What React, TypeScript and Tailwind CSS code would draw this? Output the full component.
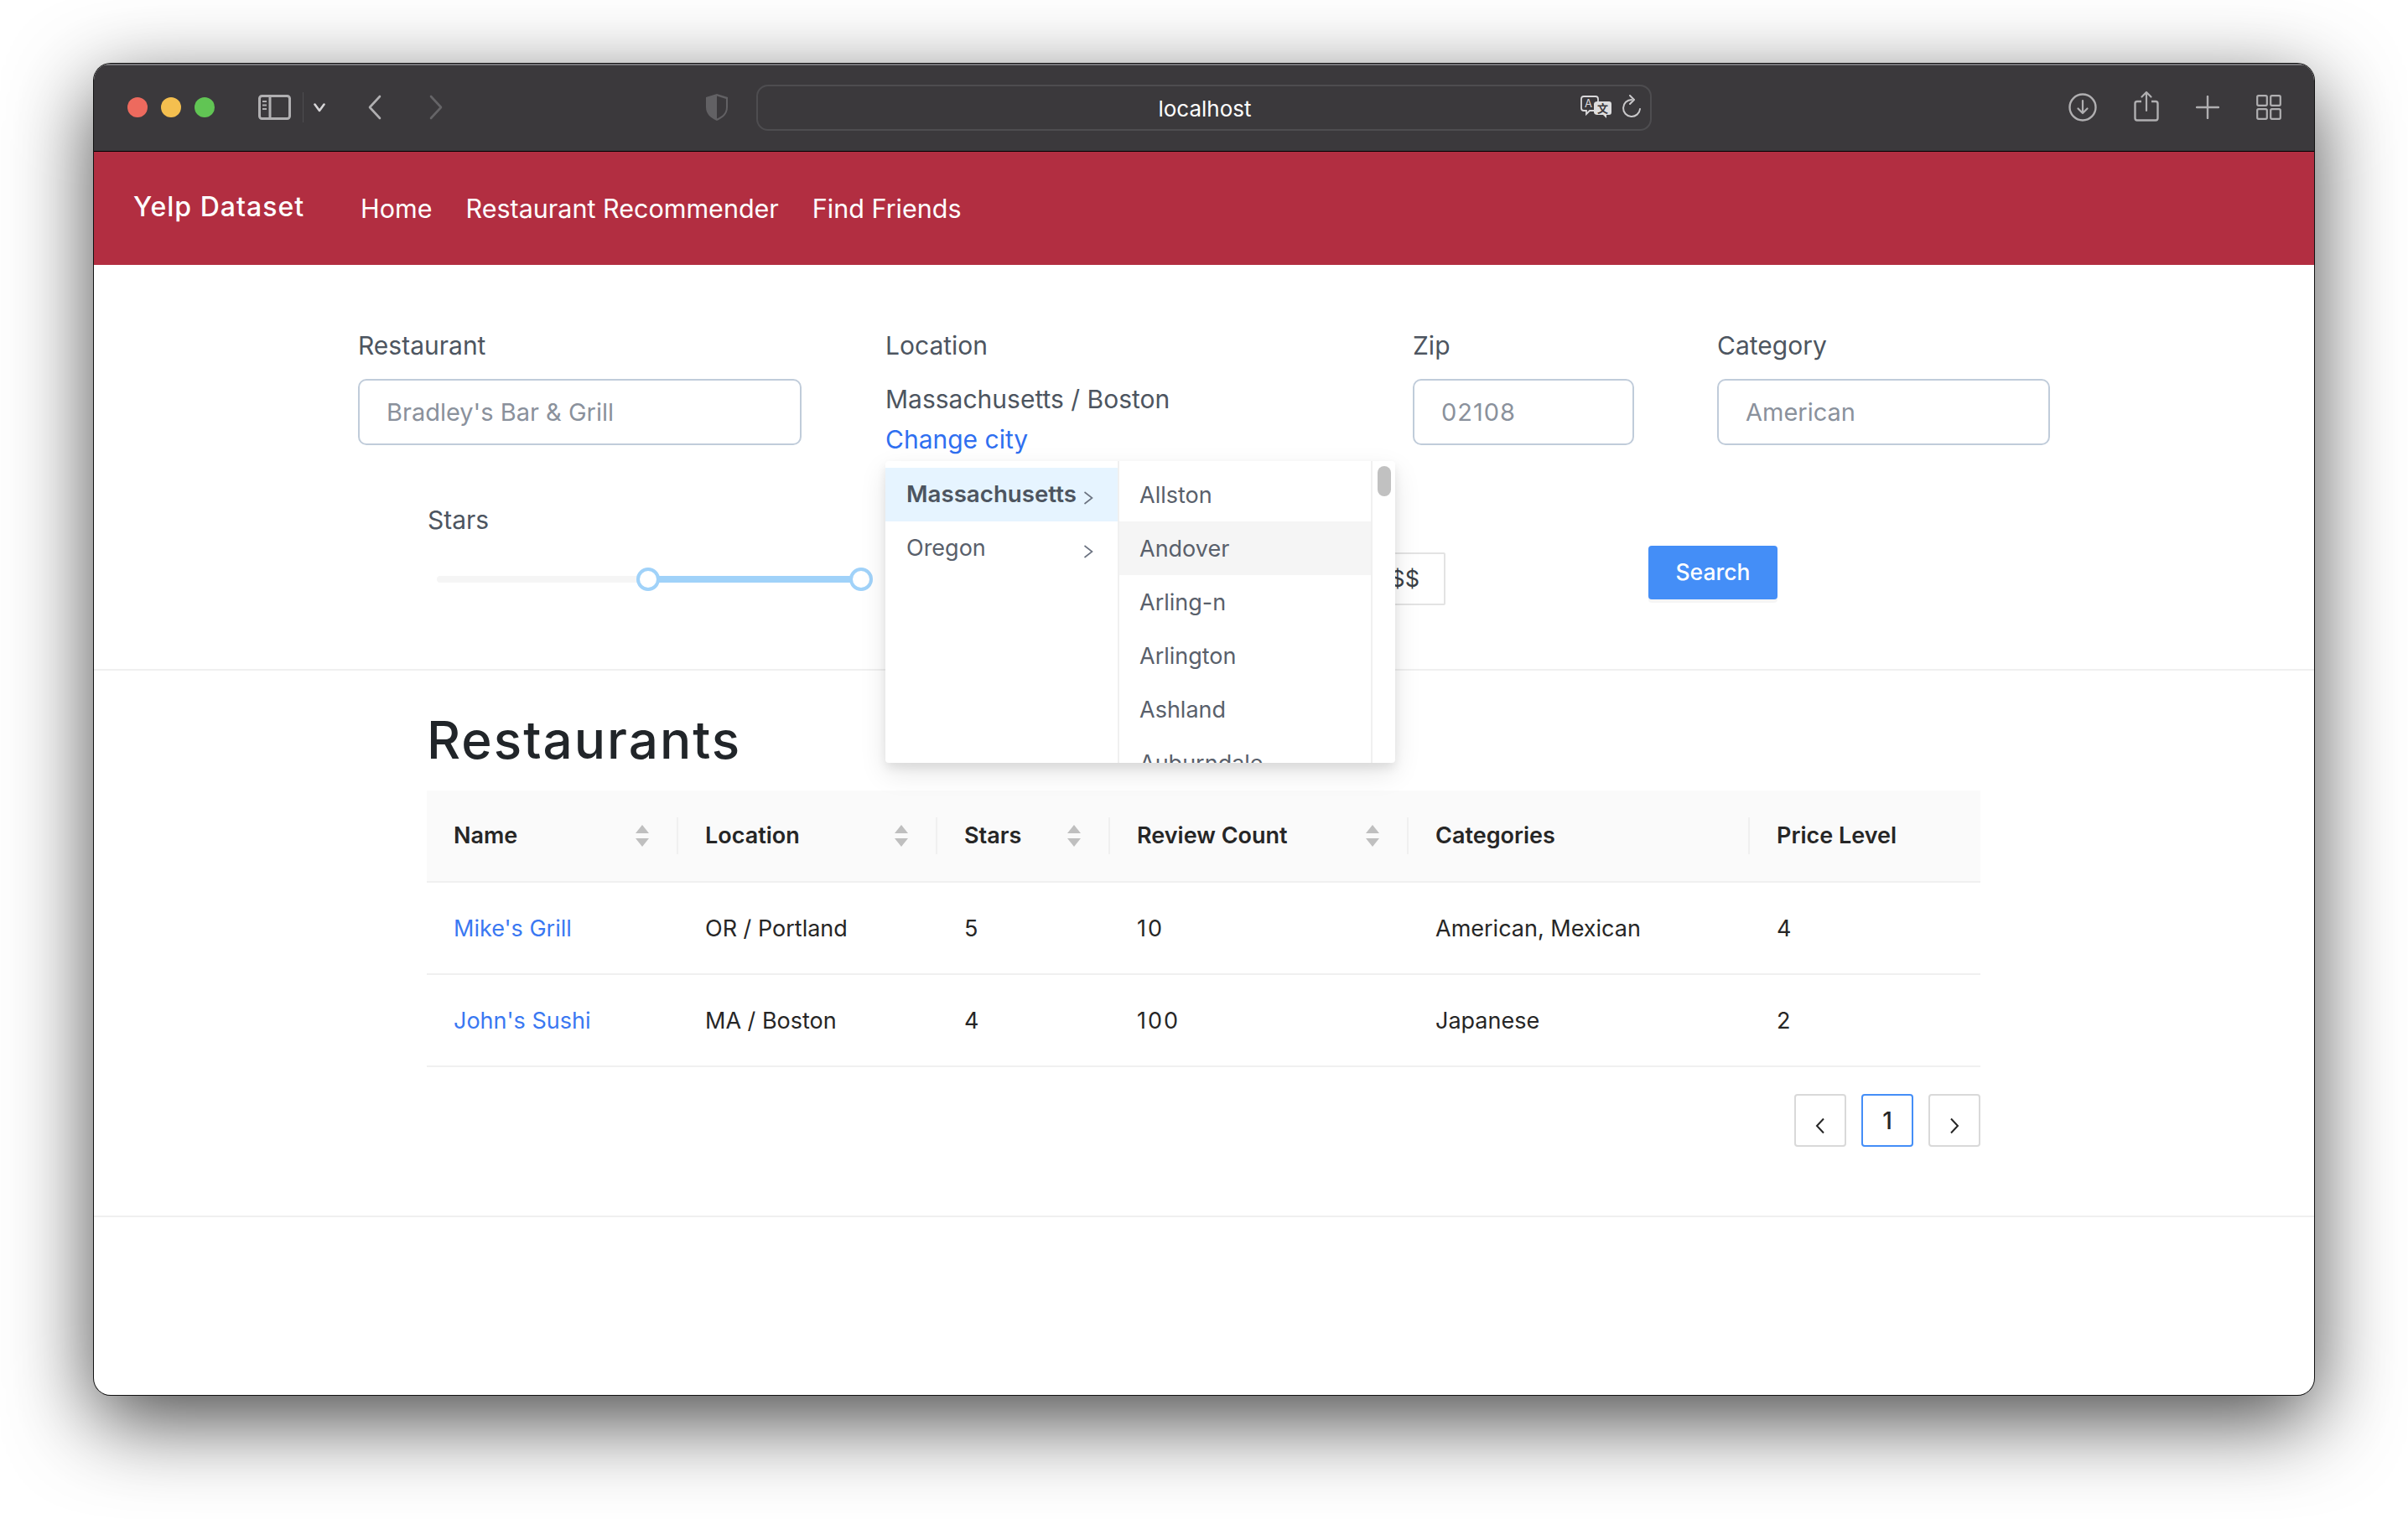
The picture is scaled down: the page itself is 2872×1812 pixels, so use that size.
const columns = [
  { title: 'Name', width: 'w-[300px]', sort: true },
  { title: 'Location', width: 'w-[309px]', sort: true },
  { title: 'Stars', width: 'w-[206px]', sort: true },
  { title: 'Review Count', width: 'w-[356px]', sort: true },
  { title: 'Categories', width: 'w-[407px]', sort: false },
  { title: 'Price Level', width: 'w-[275px]', sort: false },
]

const rows = [
  { name: "Mike's Grill", location: 'OR / Portland', stars: '5', reviews: '10', categories: 'American, Mexican', price: '4' },
  { name: "John's Sushi", location: 'MA / Boston', stars: '4', reviews: '100', categories: 'Japanese', price: '2' },
]

const cities = ['Allston', 'Andover', 'Arling-n', 'Arlington', 'Ashland', 'Auburndale']

function SortIcon() {
  return (
    <svg width="16" height="26" viewBox="0 0 16 26" className="fill-[#bfbfbf] shrink-0">
      <path d="M8 0 L16 10 H0 Z" />
      <path d="M0 16 H16 L8 26 Z" />
    </svg>
  )
}

function MenuChevron() {
  return (
    <svg width="12" height="16" viewBox="0 0 12 16" fill="none" className="stroke-[#6b7280] mt-2 shrink-0">
      <path d="M1.5 1 L10.5 8 L1.5 15" strokeWidth="1.6" />
    </svg>
  )
}

function Toolbar() {
  return (
    <div className="h-[105px] shrink-0 bg-[#3b393c] border-b border-black flex items-center pl-[40px] pr-[39px] shadow-[inset_0_2px_0_#77767a]">
      <div className="flex gap-4">
        <span className="w-6 h-6 rounded-full bg-[#ed6a5e]" />
        <span className="w-6 h-6 rounded-full bg-[#f4bf4f]" />
        <span className="w-6 h-6 rounded-full bg-[#61c554]" />
      </div>
      <svg width="39" height="30" viewBox="0 0 39 30" fill="none" className="ml-[52px] stroke-[#b0afb1]">
        <rect x="1.5" y="1.5" width="36" height="27" rx="3" strokeWidth="3" />
        <path d="M14 2 V28" strokeWidth="3" />
        <path d="M5 8 H10 M5 12.5 H10 M5 17 H10" strokeWidth="2" />
      </svg>
      <span className="ml-[14px] w-px h-[36px] bg-[#4e4d50]" />
      <svg width="14" height="11" viewBox="0 0 14 11" fill="none" className="ml-[12px] stroke-[#d6d5d7]">
        <path d="M1.5 1.5 L7 9 L12.5 1.5" strokeWidth="2.6" strokeLinecap="round" strokeLinejoin="round" />
      </svg>
      <svg width="16" height="30" viewBox="0 0 16 30" fill="none" className="ml-[51px] stroke-[#b0afb1]">
        <path d="M14 2 L2 15 L14 28" strokeWidth="2.6" strokeLinecap="round" strokeLinejoin="round" />
      </svg>
      <svg width="16" height="30" viewBox="0 0 16 30" fill="none" className="ml-[57px] stroke-[#656467]">
        <path d="M2 2 L14 15 L2 28" strokeWidth="2.6" strokeLinecap="round" strokeLinejoin="round" />
      </svg>
      <svg width="28" height="34" viewBox="0 0 28 34" className="ml-[313px]">
        <path d="M14 1 L27 5 V17 C27 25 21 30 14 33 C7 30 1 25 1 17 V5 Z" fill="#626164" />
        <path d="M14 3.5 L25 7 V17 C25 24 20 28 14 30.5 Z" fill="#3b393c" />
      </svg>
      <div className="ml-[33px] w-[1068px] h-[55px] rounded-[14px] border-2 border-[#4e4d50] grid grid-cols-[1fr_auto_1fr] items-center">
        <span />
        <span className="text-[26px] leading-none text-white mt-[4px] ml-[2px]">localhost</span>
        <div className="flex justify-end items-center pr-[10px]">
          <svg width="38" height="28" viewBox="0 0 38 28" className="mr-[11px]">
            <path d="M4 1 H18 C20 1 21 2 21 4 V15 C21 17 20 18 18 18 H11 L7 22 V18 H4 C2 18 1 17 1 15 V4 C1 2 2 1 4 1 Z" fill="none" stroke="#d9d8da" strokeWidth="1.8" />
            <text x="5" y="14" fontSize="13" fill="#d9d8da" fontFamily="Inter, sans-serif">A</text>
            <path d="M20 7 H34 C36 7 37 8 37 10 V20 C37 22 36 23 34 23 H31 V27 L27 23 H20 C18 23 16 22 16 20 V10 C16 8 18 7 20 7 Z" fill="#dededf" />
            <text x="20" y="20" fontSize="13" fontWeight="700" fill="#3b393c" fontFamily="'Noto Sans CJK SC', sans-serif">文</text>
          </svg>
          <svg width="24" height="30" viewBox="0 0 24 30" fill="none" className="stroke-[#c9c8ca]">
            <path d="M12 6 A10 10 0 1 0 22 17" strokeWidth="2" strokeLinecap="round" />
            <path d="M10 1 L15 6 L10 11" strokeWidth="2" strokeLinecap="round" strokeLinejoin="round" />
          </svg>
        </div>
      </div>
      <div className="ml-auto flex items-center gap-[44px]">
        <svg width="34" height="34" viewBox="0 0 34 34" fill="none" className="stroke-[#b0afb1]">
          <circle cx="17" cy="17" r="15.5" strokeWidth="2.4" />
          <path d="M17 9 V24 M11.5 18.5 L17 24 L22.5 18.5" strokeWidth="2.2" strokeLinecap="round" strokeLinejoin="round" />
        </svg>
        <svg width="30" height="37" viewBox="0 0 30 37" fill="none" className="stroke-[#b0afb1] -mt-[3px]">
          <path d="M9 13 H4 C2.5 13 1.5 14 1.5 15.5 V33 C1.5 34.5 2.5 35.5 4 35.5 H26 C27.5 35.5 28.5 34.5 28.5 33 V15.5 C28.5 14 27.5 13 26 13 H21" strokeWidth="2.4" />
          <path d="M15 24 V2 M9.5 7.5 L15 2 L20.5 7.5" strokeWidth="2.2" strokeLinecap="round" strokeLinejoin="round" />
        </svg>
        <svg width="28" height="28" viewBox="0 0 28 28" fill="none" className="stroke-[#b0afb1]">
          <path d="M14 1 V27 M1 14 H27" strokeWidth="2.4" strokeLinecap="round" />
        </svg>
        <svg width="30" height="30" viewBox="0 0 30 30" fill="none" className="stroke-[#b0afb1]">
          <rect x="1.2" y="1.2" width="11.6" height="11.6" rx="1.5" strokeWidth="2.2" />
          <rect x="17.2" y="1.2" width="11.6" height="11.6" rx="1.5" strokeWidth="2.2" />
          <rect x="1.2" y="17.2" width="11.6" height="11.6" rx="1.5" strokeWidth="2.2" />
          <rect x="17.2" y="17.2" width="11.6" height="11.6" rx="1.5" strokeWidth="2.2" />
        </svg>
      </div>
    </div>
  )
}

function NavBar() {
  return (
    <nav className="h-[135px] shrink-0 bg-[#b22e41] text-white flex items-center pl-[47px]">
      <a className="text-[32px] font-medium tracking-[1px] w-[271px] -mt-[3px]">Yelp Dataset</a>
      <div className="flex gap-[40px] text-[30.5px] pt-[1px]">
        <a>Home</a>
        <a>Restaurant Recommender</a>
        <a>Find Friends</a>
      </div>
    </nav>
  )
}

function CityPopup() {
  return (
    <div className="absolute left-0 top-[162px] z-10 w-[608px] h-[360px] bg-white flex overflow-hidden rounded-[4px] shadow-[0_12px_32px_rgba(0,0,0,0.1),0_6px_12px_rgba(0,0,0,0.08)]">
      <div className="w-[279px] border-r-2 border-[#f0f0f0] pt-2">
        <div className="h-16 bg-[#e6f4ff] flex items-center justify-between pl-[25px] pr-[29px] text-[27.7px] font-semibold text-[#4d5560]">
          <span>Massachusetts</span>
          <MenuChevron />
        </div>
        <div className="h-16 flex items-center justify-between pl-[25px] pr-[29px] text-[27px] text-[#59606b]">
          <span>Oregon</span>
          <MenuChevron />
        </div>
      </div>
      <div className="w-[302px] border-r-2 border-[#f0f0f0] pt-2 text-[27px] text-[#59606b]">
        {cities.map((city) => (
          <div key={city} className={`h-16 flex items-center pl-[24px] pt-[2px] ${city === 'Andover' ? 'bg-[#f5f5f5]' : ''}`}>
            {city}
          </div>
        ))}
      </div>
      <div className="flex-1 pt-[6px] flex justify-center">
        <div className="w-4 h-9 rounded-full bg-[#c1c1c1]" />
      </div>
    </div>
  )
}

function Field({ label, placeholder, width, colWidth }: { label: string; placeholder: string; width: string; colWidth: string }) {
  return (
    <div className={colWidth}>
      <div className="text-[30px] leading-[48px] text-[#4d5560] mb-4">{label}</div>
      <input
        placeholder={placeholder}
        className={`${width} block h-[79px] rounded-[10px] border-2 border-[#c0ccda] bg-white pl-[32px] text-[29px] text-[#4d5560] placeholder:text-[#8a919c] outline-none`}
      />
    </div>
  )
}

function FilterForm() {
  return (
    <section className="border-b-2 border-[#f0f0f0] pt-[72px] pb-[76px]">
      <div className="flex pl-[315px]">
        <Field label="Restaurant" placeholder="Bradley's Bar & Grill" width="w-[529px]" colWidth="w-[629px]" />
        <div className="w-[629px] relative">
          <div className="text-[30px] leading-[48px] text-[#4d5560] mb-4">Location</div>
          <div className="text-[30px] leading-[48px] text-[#4d5560]">Massachusetts / Boston</div>
          <a className="block text-[30px] leading-[48px] text-[#2f6ff0]">Change city</a>
          <CityPopup />
        </div>
        <Field label="Zip" placeholder="02108" width="w-[264px] tracking-[1px]" colWidth="w-[363px]" />
        <Field label="Category" placeholder="American" width="w-[397px]" colWidth="w-[397px]" />
      </div>
      <div className="flex pl-[398px] h-[126px] mt-[48px]">
        <div className="w-[1090px]">
          <div className="text-[30px] leading-[48px] text-[#4d5560]">Stars</div>
          <div className="relative ml-[11px] mt-[43px] w-[505px] h-2 rounded-full bg-[#f5f5f5]">
            <div className="absolute left-[252px] right-0 inset-y-0 bg-[#a0d2f9]" />
            <div className="absolute left-[238px] -top-[10px] w-7 h-7 rounded-full bg-white border-[4px] border-[#a0d2f9]" />
            <div className="absolute left-[492px] -top-[10px] w-7 h-7 rounded-full bg-white border-[4px] border-[#a0d2f9]" />
          </div>
        </div>
        <button className="mt-[63px] w-[124px] h-[63px] bg-white border-2 border-[#e3e3e3] rounded-[2px] text-[27px] text-[#3a3f46] text-right pr-[29px] pt-[2px]">
          $$
        </button>
        <button className="ml-[242px] mt-[55px] w-[154px] h-[64px] rounded-[4px] bg-[#448ef7] text-white text-[26.5px] font-medium shadow-[0_4px_0_rgba(0,0,0,0.04)]">
          Search
        </button>
      </div>
    </section>
  )
}

function ResultsTable() {
  return (
    <table className="table-fixed w-[1853px] border-separate border-spacing-0 text-[27px] text-[#262626]">
      <thead>
        <tr>
          {columns.map((col, i) => (
            <th key={col.title} className={`${col.width} h-[110px] bg-[#fafafa] border-b-2 border-[#f0f0f0] pl-8 pr-[35px] text-left font-semibold relative`}>
              <div className="flex items-center justify-between">
                <span className="mt-[1px]">{col.title}</span>
                {col.sort && <SortIcon />}
              </div>
              {i < columns.length - 1 && (
                <span className="absolute right-0 top-[32px] w-[2px] h-[44px] bg-[#f0f0f0]" />
              )}
            </th>
          ))}
        </tr>
      </thead>
      <tbody>
        {rows.map((row) => (
          <tr key={row.name}>
            <td className="h-[110px] border-b-2 border-[#f0f0f0] px-8 pt-[2px] text-[#3a78f2]">{row.name}</td>
            <td className="h-[110px] border-b-2 border-[#f0f0f0] px-8 pt-[2px]">{row.location}</td>
            <td className="h-[110px] border-b-2 border-[#f0f0f0] px-8 pt-[2px]">{row.stars}</td>
            <td className="h-[110px] border-b-2 border-[#f0f0f0] px-8 pt-[2px] tracking-[2px]">{row.reviews}</td>
            <td className="h-[110px] border-b-2 border-[#f0f0f0] px-8 pt-[2px]">{row.categories}</td>
            <td className="h-[110px] border-b-2 border-[#f0f0f0] px-8 pt-[2px]">{row.price}</td>
          </tr>
        ))}
      </tbody>
    </table>
  )
}

function Pagination() {
  return (
    <div className="flex justify-end gap-[18px] mt-8">
      <button className="w-[62px] h-[63px] rounded-[4px] border-2 border-[#d9d9d9] flex items-center justify-center pt-3">
        <svg width="12" height="20" viewBox="0 0 12 20" fill="none" className="stroke-[#262626]">
          <path d="M10 1.5 L2 10 L10 18.5" strokeWidth="2" />
        </svg>
      </button>
      <button className="w-[62px] h-[63px] rounded-[4px] border-2 border-[#448ef7] text-[28px] font-medium text-[#262626]">1</button>
      <button className="w-[62px] h-[63px] rounded-[4px] border-2 border-[#d9d9d9] flex items-center justify-center pt-3">
        <svg width="12" height="20" viewBox="0 0 12 20" fill="none" className="stroke-[#262626]">
          <path d="M2 1.5 L10 10 L2 18.5" strokeWidth="2" />
        </svg>
      </button>
    </div>
  )
}

export default function App() {
  return (
    <div className="w-[2872px] h-[1812px] bg-white pt-[76px] pl-[112px] overflow-hidden font-['Inter',sans-serif]">
      <div className="w-[2648px] h-[1588px] rounded-[20px] bg-white flex flex-col overflow-hidden shadow-[0_0_0_1px_#111,0_30px_100px_rgba(0,0,0,0.72)]">
        <Toolbar />
        <NavBar />
        <main className="flex-1">
          <FilterForm />
          <section className="border-b-2 border-[#f0f0f0] pl-[397px] pt-[47px] pb-[82px]">
            <h1 className="text-[62px] leading-[72px] font-medium tracking-[2px] text-[#212529] mb-6">Restaurants</h1>
            <ResultsTable />
            <div className="w-[1853px]">
              <Pagination />
            </div>
          </section>
        </main>
      </div>
    </div>
  )
}
